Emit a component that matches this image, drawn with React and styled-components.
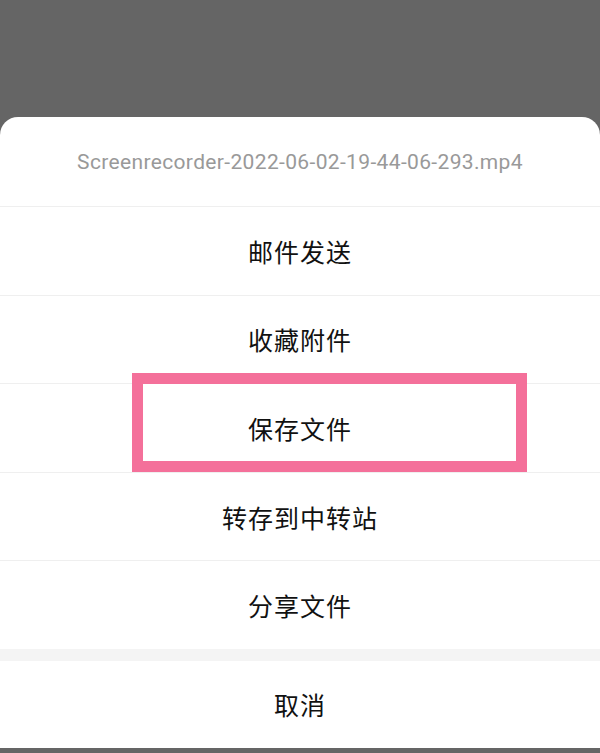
import React from 'react';
import styled, { createGlobalStyle } from 'styled-components';

const Global = createGlobalStyle`
  html, body {
    margin: 0;
    padding: 0;
    background: #656565;
  }
  body {
    font-family: Roboto, "Noto Sans CJK SC", sans-serif;
  }
`;

const Screen = styled.div`
  width: 600px;
  height: 753px;
  padding-top: 117px;
  box-sizing: border-box;
  position: relative;
  overflow: hidden;
`;

const Sheet = styled.div`
  background: #fff;
  border-radius: 18px 18px 0 0;
  display: flex;
  flex-direction: column;
`;

const Title = styled.div`
  height: 89px;
  display: flex;
  align-items: center;
  justify-content: center;
  color: #999;
  font-size: 21px;
  letter-spacing: 0.35px;
`;

const Item = styled.div`
  height: 88.6px;
  box-sizing: border-box;
  border-top: 1px solid #efefef;
  display: flex;
  align-items: center;
  justify-content: center;
  color: #111;
  font-family: "Noto Sans CJK SC", sans-serif;
  font-size: 25px;
  letter-spacing: 1px;
`;

const Gap = styled.div`
  height: 12px;
  background: #f4f4f4;
`;

const Cancel = styled(Item)`
  height: 87px;
  border-top: none;
`;

const Highlight = styled.div`
  position: absolute;
  left: 132px;
  top: 373px;
  width: 395px;
  height: 99px;
  box-sizing: border-box;
  border: 11px solid #f4709a;
  pointer-events: none;
`;

const items = ['邮件发送', '收藏附件', '保存文件', '转存到中转站', '分享文件'];

export default function App() {
  return (
    <>
      <Global />
      <Screen>
        <Sheet>
          <Title>Screenrecorder-2022-06-02-19-44-06-293.mp4</Title>
          {items.map((t) => (
            <Item key={t}>{t}</Item>
          ))}
          <Gap />
          <Cancel>取消</Cancel>
        </Sheet>
        <Highlight />
      </Screen>
    </>
  );
}
